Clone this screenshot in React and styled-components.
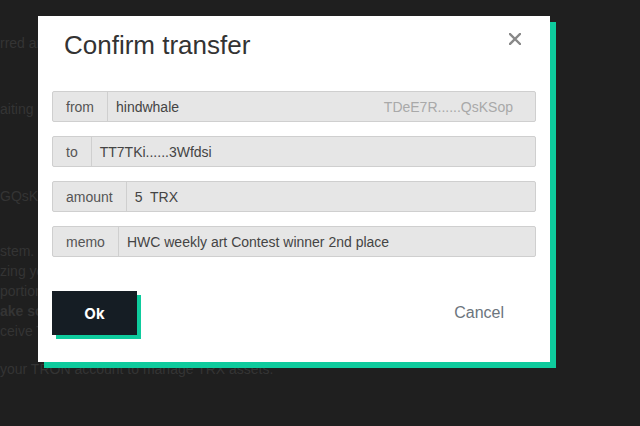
import React from "react";
import styled, { createGlobalStyle } from "styled-components";

const Global = createGlobalStyle`
  html, body { margin: 0; padding: 0; background: #1f1f1f; }
  body { font-family: "Liberation Sans", Arial, sans-serif; overflow: hidden; }
  #root { width: 640px; height: 426px; }
`;

const Page = styled.div`
  position: relative;
  width: 640px;
  height: 426px;
  background: #1f1f1f;
  overflow: hidden;
`;

const BgText = styled.div`
  display: flex;
  flex-direction: column;
  color: #343434;
  font-size: 14px;
  padding-top: 33px;
`;

const BgLine = styled.div`
  white-space: nowrap;
  height: 20px;
  line-height: 20px;
  margin-top: ${(p) => p.$gap || 0}px;
  font-weight: ${(p) => (p.$bold ? 700 : 400)};
`;

const Modal = styled.div`
  position: absolute;
  left: 38px;
  top: 16px;
  width: 512px;
  height: 346px;
  background: #fff;
  box-shadow: 6px 6px 0 #0ecb9d;
  box-sizing: border-box;
  display: flex;
  flex-direction: column;
  padding: 13px 14px 27px;
`;

const Header = styled.div`
  display: flex;
  justify-content: space-between;
  align-items: flex-start;
  padding-left: 12px;
`;

const Title = styled.h2`
  margin: 0;
  font-size: 26px;
  line-height: 32px;
  font-weight: 400;
  color: #333;
  font-family: "Liberation Sans", Arial, sans-serif;
`;

const Close = styled.button`
  border: 0;
  background: none;
  padding: 0;
  margin: 3px 14px 0 0;
  width: 14px;
  height: 14px;
  display: flex;
  align-items: center;
  justify-content: center;
  cursor: pointer;
`;

const Fields = styled.div`
  display: flex;
  flex-direction: column;
  gap: 14px;
  margin-top: 30px;
`;

const Row = styled.div`
  display: flex;
  height: 31px;
  box-sizing: border-box;
  border: 1px solid #cfcfcf;
  background: #e6e6e6;
  border-radius: 2px;
  font-size: 14px;
  color: #444;
`;

const Label = styled.div`
  display: flex;
  align-items: center;
  padding: 0 13px;
  border-right: 1px solid #cfcfcf;
  color: #555;
`;

const Value = styled.div`
  flex: 1;
  display: flex;
  align-items: center;
  justify-content: space-between;
  padding: 0 22px 0 8px;
  color: #444;
`;

const Addr = styled.span`
  color: #a9a9a9;
`;

const Footer = styled.div`
  margin-top: auto;
  display: flex;
  justify-content: space-between;
  align-items: center;
`;

const OkButton = styled.button`
  width: 85px;
  height: 44px;
  border: 0;
  background: #151d24;
  color: #fff;
  font-family: Inter, "Open Sans", sans-serif;
  font-weight: 700;
  font-size: 15px;
  box-shadow: 4px 4px 0 #0ecb9d;
  cursor: pointer;
`;

const CancelButton = styled.button`
  border: 0;
  background: none;
  color: #6c757d;
  font-family: "Liberation Sans", Arial, sans-serif;
  font-size: 16px;
  margin-right: 32px;
  padding: 0;
  cursor: pointer;
`;

const rows = [
  { label: "from", value: "hindwhale", addr: "TDeE7R......QsKSop" },
  { label: "to", value: "TT7TKi......3Wfdsi" },
  { label: "amount", value: "5\u00a0 TRX" },
  { label: "memo", value: "HWC weekly art Contest winner 2nd place" },
];

export default function App() {
  return (
    <Page>
      <Global />
      <BgText>
        <BgLine>rred any</BgLine>
        <BgLine $gap={46}>aiting p</BgLine>
        <BgLine $gap={67}>GQsKS</BgLine>
        <BgLine $gap={35}>stem. Y</BgLine>
        <BgLine>zing yo</BgLine>
        <BgLine>portion</BgLine>
        <BgLine $bold>ake so</BgLine>
        <BgLine>ceive T</BgLine>
        <BgLine $gap={18}>your TRON account to manage TRX assets.</BgLine>
      </BgText>
      <Modal>
        <Header>
          <Title>Confirm transfer</Title>
          <Close aria-label="close">
            <svg width="12" height="12" viewBox="0 0 12 12">
              <path d="M1 1 L11 11 M11 1 L1 11" stroke="#888" strokeWidth="2.4" strokeLinecap="square" />
            </svg>
          </Close>
        </Header>
        <Fields>
          {rows.map((r) => (
            <Row key={r.label}>
              <Label>{r.label}</Label>
              <Value>
                <span>{r.value}</span>
                {r.addr && <Addr>{r.addr}</Addr>}
              </Value>
            </Row>
          ))}
        </Fields>
        <Footer>
          <OkButton>Ok</OkButton>
          <CancelButton>Cancel</CancelButton>
        </Footer>
      </Modal>
    </Page>
  );
}
